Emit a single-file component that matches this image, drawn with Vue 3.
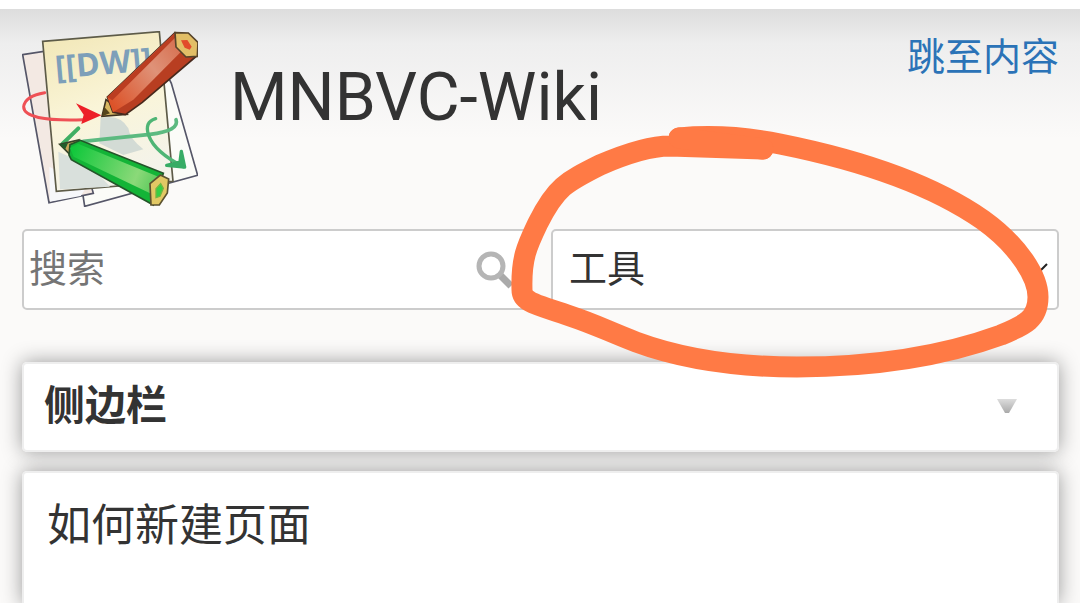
<template>
  <div class="page">
    <header class="header">
      <div class="top">
        <a class="brand" href="#home">
          <svg class="logo" viewBox="36 33 528 528" aria-hidden="true">
            <defs>
              <linearGradient id="paper" x1="0" y1="0" x2="0.3" y2="1">
                <stop offset="0" stop-color="#f1e6b5" />
                <stop offset="0.55" stop-color="#faf5d8" />
                <stop offset="1" stop-color="#f4f3ea" />
              </linearGradient>
              <linearGradient id="red" x1="300" y1="250" x2="520" y2="80" gradientUnits="userSpaceOnUse">
                <stop offset="0" stop-color="#dc5228" />
                <stop offset="0.6" stop-color="#df9278" />
                <stop offset="1" stop-color="#d66f50" />
              </linearGradient>
              <linearGradient id="green" x1="190" y1="390" x2="440" y2="500" gradientUnits="userSpaceOnUse">
                <stop offset="0" stop-color="#12c83c" />
                <stop offset="0.75" stop-color="#8bd979" />
                <stop offset="1" stop-color="#58c95a" />
              </linearGradient>
            </defs>
            <path d="M212 480 L464 150 L484 190 L563 466 L224 559 Z" fill="#fbfcf8" stroke="#555668" stroke-width="5" />
            <path d="M38 104 L130 90 L250 520 L117 548 Z" fill="#f3e9e3" stroke="#555668" stroke-width="5" />
            <path d="M118 440 L230 500 L212 528 L120 545 Z" fill="#f6f7fa" />
            <path d="M98 64 L448 35 L489 484 L139 514 Z" fill="url(#paper)" stroke="#5d5b48" stroke-width="5" />
            <path d="M272 294 Q330 280 355 325 Q358 355 400 388 L340 405 L268 370 Z" fill="#d3dbd5" />
            <path d="M145 395 L245 440 L300 500 L150 508 Z" fill="#d9e0dc" />
            <text x="138" y="176" class="logo-text" transform="rotate(-5 138 176)">[[DW]]</text>
            <g fill="none" stroke-linecap="round" stroke-linejoin="round">
              <path d="M104 218 Q45 228 41 260 Q40 305 220 299" stroke="#ef5055" stroke-width="9" />
              <path d="M198 250 L274 286 L214 312 L221 284 Z" fill="#ed2028" />
              <path d="M220 364 Q340 351 420 343 Q510 332 498 299" stroke="#5cba80" stroke-width="11" />
              <path d="M437 296 Q402 306 416 346 Q434 396 520 440" stroke="#4eb575" stroke-width="10" />
              <path d="M470 436 L524 441 L514 394 L510 426 Z" fill="#37ac65" stroke="#37ac65" stroke-width="10" />
              <path d="M205 325 L157 372" stroke="#3faf63" stroke-width="12" />
            </g>
            <path d="M276 289 L288 239 L350 283 Z" fill="#d8b862" stroke="#3f3322" stroke-width="5" />
            <path d="M292 231 L495 38 L561 107 L397 247 L346 284 L309 277 Z" fill="#b83e21" stroke="#47291c" stroke-width="5" />
            <path d="M292 231 L495 38 L530 78 L370 239 L309 277 Z" fill="url(#red)" />
            <path d="M292 231 L495 38 L500 49 L307 241 Z" fill="#bb3d21" />
            <path d="M495 38 L535 39 L564 67 L562 109 L528 111 L498 81 Z" fill="#e2be66" stroke="#57442b" stroke-width="5" />
            <path d="M513 61 L532 60 L545 80 L539 89 L524 83 Z" fill="#e24a2b" />
            <path d="M276 289 L283 261 L300 280 Z" fill="#55451c" />
            <path d="M149 373 L206 360 L183 407 Z" fill="#c6a45a" stroke="#39422a" stroke-width="5" />
            <path d="M177 405 L180 374 L211 361 L460 460 L430 555 L184 419 Z" fill="#13b437" stroke="#24552a" stroke-width="5" />
            <path d="M180 384 L204 371 L447 471 L425 522 L191 410 Z" fill="url(#green)" />
            <path d="M420 491 L451 465 L476 477 L472 519 L448 555 L423 555 Z" fill="#e2c865" stroke="#5b5230" stroke-width="5" />
            <path d="M438 506 L452 491 L460 505 L450 529 L438 533 Z" fill="#36cf45" stroke="#70b742" stroke-width="4" />
            <path d="M149 373 L174 369 L165 389 Z" fill="#215d2c" />
          </svg>
          <span class="title">MNBVC-Wiki</span>
        </a>
        <a class="skip" href="#content">跳至内容</a>
      </div>

      <form class="tools" @submit.prevent>
        <div class="field">
          <input v-model="query" class="control search" type="text" placeholder="搜索" aria-label="搜索" />
          <button class="search-button" type="submit" aria-label="搜索">
            <svg viewBox="0 0 40 40" aria-hidden="true">
              <path d="M25 25 L37 37" stroke="#aaa" stroke-width="7" />
              <circle cx="17" cy="17" r="12" fill="#fff" stroke="#b5b5b5" stroke-width="5" />
            </svg>
          </button>
        </div>
        <div class="field">
          <select v-model="tool" class="control select" aria-label="工具">
            <option value="">工具</option>
          </select>
          <svg class="chevron" viewBox="0 0 20 12" aria-hidden="true">
            <path d="M2 2 L10 10 L18 2" fill="none" stroke="#222" stroke-width="2" />
          </svg>
        </div>
      </form>
    </header>

    <main class="main">
      <h3 class="card sidebar">
        <button class="toggle" type="button">
          <span>侧边栏</span>
          <svg class="arrow" viewBox="0 0 20 14" aria-hidden="true">
            <defs>
              <linearGradient id="arrow" x1="0" y1="0" x2="0" y2="1">
                <stop offset="0" stop-color="#ddd" />
                <stop offset="1" stop-color="#aaa" />
              </linearGradient>
            </defs>
            <path d="M0 0 H20 L12 14 H8 Z" fill="url(#arrow)" />
          </svg>
        </button>
      </h3>
      <article id="content" class="card content">
        <p>如何新建页面</p>
      </article>
    </main>

    <!-- hand-drawn marker around the tools menu -->
    <svg class="marker" viewBox="0 0 1080 603" aria-hidden="true">
      <path d="M679 138 C710 135 745 137 780 144 C855 159 930 183 983 220 C1019 246 1038 277 1038 297 C1038 319 1025 325 1001 335 C935 359 865 367 797 367 C740 367 682 359 636 342 C605 330 597 325 570 316 C539 305 522 303 522 290 C521 258 527 246 538 223 C556 187 566 182 600 165 C630 152 654 146 670 146 L763 149" />
      <path d="M679 138 L763 149" />
    </svg>
  </div>
</template>

<script setup>
import { ref } from 'vue'

const query = ref('')
const tool = ref('')
</script>

<style>
body {
  margin: 0;
  background: #fff;
}
</style>

<style scoped>
.page {
  position: relative;
  isolation: isolate;
  box-sizing: border-box;
  display: flex;
  flex-direction: column;
  min-height: 100vh;
  padding: 22px 21px 0 22px;
  border-top: 9px solid #fff;
  overflow: hidden;
  background: linear-gradient(#ddd, #eee 35px, #fbfaf9 130px);
  color: #333;
  font-family: Roboto, "Noto Sans CJK SC", sans-serif;
  font-size: 38px;
}
.top {
  display: flex;
  justify-content: space-between;
  align-items: flex-start;
}
.brand {
  display: flex;
  align-items: flex-start;
  gap: 30px;
  color: #333;
  text-decoration: none;
}
.logo {
  display: block;
  width: 176px;
  height: 176px;
}
.logo-text {
  font-family: "Open Sans", sans-serif;
  font-size: 96px;
  font-weight: 700;
  fill: #7d9fb9;
}
.title {
  padding: 26px 0 0 2px;
  font-size: 66px;
  line-height: 82px;
}
.skip {
  color: #2b73b7;
  line-height: 52px;
  text-decoration: none;
}
.tools {
  display: grid;
  grid-template-columns: 1fr 1fr;
  gap: 21px;
  margin-top: 22px;
}
.field {
  position: relative;
}
.control {
  display: block;
  box-sizing: border-box;
  width: 100%;
  height: 81px;
  margin: 0;
  border: 2px solid #ccc;
  border-radius: 5px;
  background: #fff;
  color: #333;
  font: inherit;
  appearance: none;
}
.search {
  padding: 0 60px 2px 5px;
}
.search::placeholder {
  color: #757575;
  opacity: 1;
}
.select {
  padding: 0 40px 2px 16px;
}
.search-button {
  position: absolute;
  top: 20px;
  right: 16px;
  width: 40px;
  height: 40px;
  padding: 0;
  border: 0;
  background: none;
}
.search-button svg {
  display: block;
}
.chevron {
  position: absolute;
  top: 33px;
  right: 10px;
  width: 20px;
  height: 12px;
  pointer-events: none;
}
.main {
  display: flex;
  flex: 1;
  flex-direction: column;
  gap: 19px;
  margin-top: 52px;
}
.card {
  position: relative;
  box-sizing: border-box;
  margin: 0;
  border: 2px solid #eee;
  border-radius: 5px;
  background: #fff;
}
/* shadows stay behind both cards */
.card::before {
  content: "";
  position: absolute;
  z-index: -1;
  inset: -2px;
  border-radius: 5px;
  box-shadow: 0 0 20px #999;
}
.toggle {
  display: flex;
  align-items: center;
  justify-content: space-between;
  width: 100%;
  height: 86px;
  padding: 0 40px 2px 20px;
  border: 0;
  background: none;
  color: #333;
  font: inherit;
  font-size: 41px;
  font-weight: 700;
}
.toggle span {
  padding-bottom: 8px;
}
.arrow {
  width: 20px;
  height: 14px;
}
.content {
  flex: 1;
  padding: 20px 23px;
  border-bottom: 0;
  border-radius: 5px 5px 0 0;
}
.content p {
  margin: 0;
  font-size: 44px;
  line-height: 66px;
}
.marker {
  position: absolute;
  z-index: 2;
  top: -9px;
  left: 0;
  width: 100%;
  fill: none;
  stroke: #ff7a45;
  stroke-width: 21px;
  stroke-linecap: round;
  stroke-linejoin: round;
  pointer-events: none;
}
</style>
